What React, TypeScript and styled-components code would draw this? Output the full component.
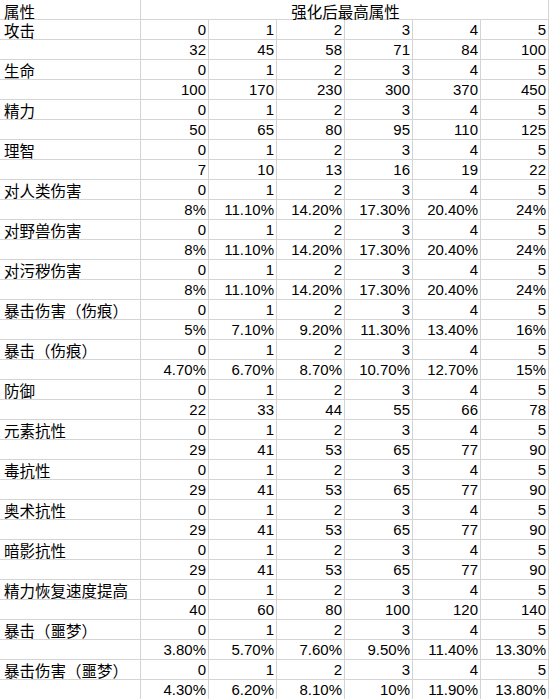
import React from 'react';
import styled, { createGlobalStyle } from 'styled-components';

const GlobalStyle = createGlobalStyle`
  html, body {
    margin: 0;
    padding: 0;
    background: #fff;
  }
`;

interface RowData {
  name: string;
  values: string[];
}

const levels = ['0', '1', '2', '3', '4', '5'];

const rows: RowData[] = [
  { name: '攻击', values: ['32', '45', '58', '71', '84', '100'] },
  { name: '生命', values: ['100', '170', '230', '300', '370', '450'] },
  { name: '精力', values: ['50', '65', '80', '95', '110', '125'] },
  { name: '理智', values: ['7', '10', '13', '16', '19', '22'] },
  { name: '对人类伤害', values: ['8%', '11.10%', '14.20%', '17.30%', '20.40%', '24%'] },
  { name: '对野兽伤害', values: ['8%', '11.10%', '14.20%', '17.30%', '20.40%', '24%'] },
  { name: '对污秽伤害', values: ['8%', '11.10%', '14.20%', '17.30%', '20.40%', '24%'] },
  { name: '暴击伤害（伤痕）', values: ['5%', '7.10%', '9.20%', '11.30%', '13.40%', '16%'] },
  { name: '暴击（伤痕）', values: ['4.70%', '6.70%', '8.70%', '10.70%', '12.70%', '15%'] },
  { name: '防御', values: ['22', '33', '44', '55', '66', '78'] },
  { name: '元素抗性', values: ['29', '41', '53', '65', '77', '90'] },
  { name: '毒抗性', values: ['29', '41', '53', '65', '77', '90'] },
  { name: '奥术抗性', values: ['29', '41', '53', '65', '77', '90'] },
  { name: '暗影抗性', values: ['29', '41', '53', '65', '77', '90'] },
  { name: '精力恢复速度提高', values: ['40', '60', '80', '100', '120', '140'] },
  { name: '暴击（噩梦）', values: ['3.80%', '5.70%', '7.60%', '9.50%', '11.40%', '13.30%'] },
  { name: '暴击伤害（噩梦）', values: ['4.30%', '6.20%', '8.10%', '10%', '11.90%', '13.80%'] },
];

export default function App() {
  return (
    <>
      <GlobalStyle />
      <Sheet>
        <HeadCell>属性</HeadCell>
        <HeadCell $span={6}>强化后最高属性</HeadCell>
        {rows.map((row) => (
          <React.Fragment key={row.name}>
            <LabelCell>{row.name}</LabelCell>
            {levels.map((lv) => (
              <Cell key={lv}>{lv}</Cell>
            ))}
            <LabelCell />
            {row.values.map((v, i) => (
              <Cell key={i}>{v}</Cell>
            ))}
          </React.Fragment>
        ))}
      </Sheet>
    </>
  );
}

const Sheet = styled.div`
  display: grid;
  grid-template-columns: 141px repeat(6, 68px);
  grid-auto-rows: 20px;
  width: 549px;
  font-family: 'Liberation Sans', 'Noto Sans CJK SC', sans-serif;
  font-size: 15px;
  color: #000;
`;

const Cell = styled.div`
  box-sizing: border-box;
  border-right: 1px solid #d4d4d4;
  border-bottom: 1px solid #d4d4d4;
  padding: 0 2px 0 3px;
  line-height: 20px;
  text-align: right;
  white-space: nowrap;
`;

const LabelCell = styled(Cell)`
  font-family: 'Noto Sans CJK SC', sans-serif;
  font-size: 15.5px;
  line-height: 19px;
  padding-top: 1px;
  padding-left: 4px;
  text-align: left;
`;

const HeadCell = styled(LabelCell)<{ $span?: number }>`
  grid-column: span ${(p) => p.$span ?? 1};
  padding-top: 2px;
  text-align: ${(p) => (p.$span ? 'center' : 'left')};
`;
